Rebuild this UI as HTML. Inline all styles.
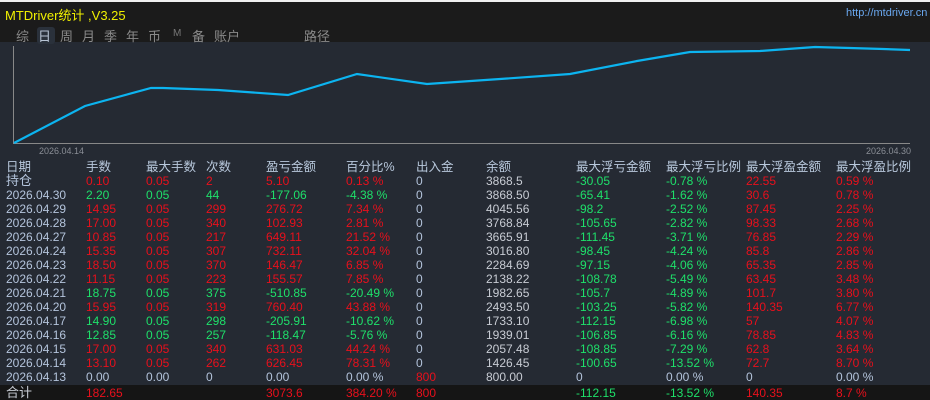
<!DOCTYPE html>
<html><head><meta charset="utf-8"><style>
*{margin:0;padding:0;box-sizing:border-box}
body{width:930px;height:400px;background:#252a33;overflow:hidden;position:relative;font-family:"Liberation Sans","Noto Sans CJK SC",sans-serif;}
#top{position:absolute;left:0;top:0;width:930px;height:42px;background:#1b1b1b;border-top:2px solid #f0f0f0}
.t{position:absolute;white-space:nowrap}
.row{position:absolute;left:0;width:930px;height:14px;font-size:12px;line-height:14px}
.row span{position:absolute;top:0;white-space:nowrap}
.r{color:#e8101c}.g{color:#1ee06a}.n{color:#b4c4dc}.w{color:#c8ccd4}
#rows{position:absolute;left:0;top:0;z-index:2}
</style></head><body>
<div id="top">
<div class="t" style="left:5px;top:3px;font-size:13px;color:#f0f000">MTDriver统计 ,V3.25</div>
<div class="t" style="left:846px;top:5px;font-size:11px;color:#6aa8f0">http://mtdriver.cn</div>
<div class="t" style="left:37px;top:25px;width:18px;height:17px;background:#2a313b;border-radius:3px"></div>
<div class="t" style="top:24px;left:16px;font-size:13px;color:#8a8a8a;word-spacing:0">
<span style="position:absolute;left:0">综</span><span style="position:absolute;left:22px;color:#b8c4d4">日</span><span style="position:absolute;left:44px">周</span><span style="position:absolute;left:66px">月</span><span style="position:absolute;left:88px">季</span><span style="position:absolute;left:110px">年</span><span style="position:absolute;left:132px">币</span><span style="position:absolute;left:157px;font-size:10px;top:2px;color:#777">M</span><span style="position:absolute;left:176px">备</span><span style="position:absolute;left:198px">账户</span><span style="position:absolute;left:288px">路径</span></div>
</div>
<svg style="position:absolute;left:0;top:42px" width="930" height="120">
<line x1="13.5" y1="4" x2="13.5" y2="101" stroke="#888" stroke-width="1"/>
<line x1="13" y1="101.5" x2="910" y2="101.5" stroke="#888" stroke-width="1"/>
<polyline fill="none" stroke="#0cb4f0" stroke-width="2.2" points="14,101 85,64 151,46 163,46 218,48 288,53 357,32 427,42 500,37 570,32 637,19 690,10 760,9 815,5 850,6 883,7 910,8"/>
<text x="39" y="112" font-size="9" fill="#8a8e96" font-family="Liberation Sans">2026.04.14</text>
<text x="866" y="112" font-size="9" fill="#8a8e96" font-family="Liberation Sans">2026.04.30</text>
</svg>
<div class="row n" style="top:159px;font-size:12.5px;height:16px;line-height:16px;color:#b8c8dc">
<span style="left:6px">日期</span><span style="left:86px">手数</span><span style="left:146px">最大手数</span><span style="left:206px">次数</span><span style="left:266px">盈亏金额</span><span style="left:346px">百分比%</span><span style="left:416px">出入金</span><span style="left:486px">余额</span><span style="left:576px">最大浮亏金额</span><span style="left:666px">最大浮亏比例</span><span style="left:746px">最大浮盈金额</span><span style="left:836px">最大浮盈比例</span></div>
<div id="rows"></div>
<div style="position:absolute;left:0;top:385px;width:930px;height:15px;background:#151515"></div>
<script>
var d=[
["持仓","r","0.10","0.05","2","5.10","0.13 %","0","3868.5","-30.05","-0.78 %","22.55","0.59 %"],
["2026.04.30","g","2.20","0.05","44","-177.06","-4.38 %","0","3868.50","-65.41","-1.62 %","30.6","0.78 %"],
["2026.04.29","r","14.95","0.05","299","276.72","7.34 %","0","4045.56","-98.2","-2.52 %","87.45","2.25 %"],
["2026.04.28","r","17.00","0.05","340","102.93","2.81 %","0","3768.84","-105.65","-2.82 %","98.33","2.68 %"],
["2026.04.27","r","10.85","0.05","217","649.11","21.52 %","0","3665.91","-111.45","-3.71 %","76.85","2.29 %"],
["2026.04.24","r","15.35","0.05","307","732.11","32.04 %","0","3016.80","-98.45","-4.24 %","85.8","2.86 %"],
["2026.04.23","r","18.50","0.05","370","146.47","6.85 %","0","2284.69","-97.15","-4.06 %","65.35","2.85 %"],
["2026.04.22","r","11.15","0.05","223","155.57","7.85 %","0","2138.22","-108.78","-5.49 %","63.45","3.48 %"],
["2026.04.21","g","18.75","0.05","375","-510.85","-20.49 %","0","1982.65","-105.7","-4.89 %","101.7","3.80 %"],
["2026.04.20","r","15.95","0.05","319","760.40","43.88 %","0","2493.50","-103.25","-5.82 %","140.35","6.77 %"],
["2026.04.17","g","14.90","0.05","298","-205.91","-10.62 %","0","1733.10","-112.15","-6.98 %","57","4.07 %"],
["2026.04.16","g","12.85","0.05","257","-118.47","-5.76 %","0","1939.01","-106.85","-6.16 %","78.85","4.83 %"],
["2026.04.15","r","17.00","0.05","340","631.03","44.24 %","0","2057.48","-108.85","-7.29 %","62.8","3.64 %"],
["2026.04.14","r","13.10","0.05","262","626.45","78.31 %","0","1426.45","-100.65","-13.52 %","72.7","8.70 %"],
["2026.04.13","n","0.00","0.00","0","0.00","0.00 %","800","800.00","0","0.00 %","0","0.00 %"],
["合计","r","182.65","","","3073.6","384.20 %","800","","-112.15","-13.52 %","140.35","8.7 %"]];
var xs=[6,86,146,206,266,346,416,486,576,666,746,836];
var h="";
d.forEach(function(r,i){
 var top=174+i*14; if(i==15) top=386;
 var c=r[1];
 var cls=[ "n",c,c,c,c,c, (i==14||i==15)?"r":"n", "w", c=="n"?"n":"g", c=="n"?"n":"g", c=="n"?"n":"r", c=="n"?"n":"r"];
 if(i==15){cls[0]="w";}
 var vals=[r[0]].concat(r.slice(2));
 h+='<div class="row" style="top:'+top+'px">';
 vals.forEach(function(v,j){
  var st=(j==0&&(i==0||i==15))?"font-size:13px;":"";
  h+='<span class="'+cls[j]+'" style="left:'+xs[j]+'px;'+st+'">'+v+'</span>';});
 h+='</div>';
});
document.getElementById("rows").innerHTML=h;
</script>
</body></html>
